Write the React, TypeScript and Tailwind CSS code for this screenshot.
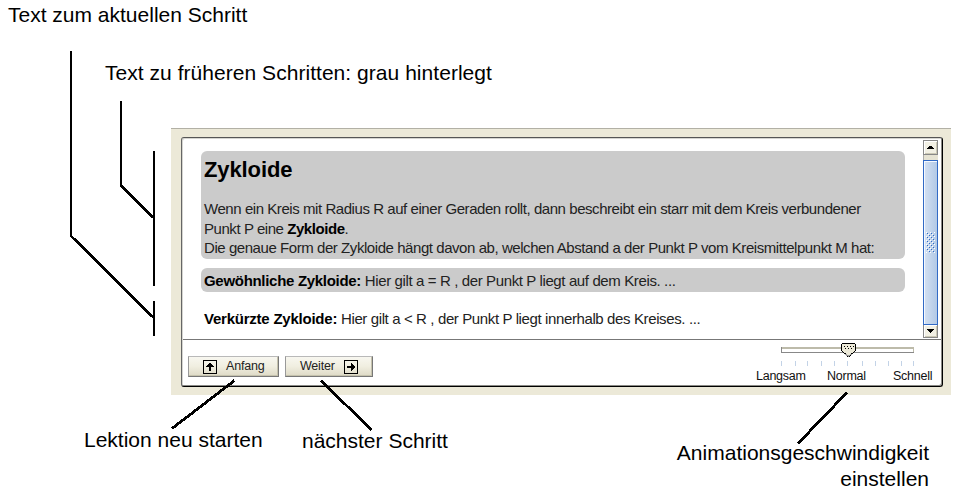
import type { ReactNode } from "react";

const ticks = [0, 14, 26, 40, 53, 66, 81, 94, 107, 120, 132];

function Leaders() {
  return (
    <svg
      className="pointer-events-none absolute inset-0"
      width="953"
      height="494"
      fill="none"
      stroke="#000"
      strokeWidth="2"
      shapeRendering="crispEdges"
    >
      <path d="M71 51V236M121 101V186M154 151V286M154 301V336" />
      <path d="M71 236L154 318M121 186L154 218" strokeWidth="2.800" />
      <path d="M234.500 380.500L172 428.500M321 380.500L371.500 430M847 392.500L798 443.500" strokeWidth="2.800" />
    </svg>
  );
}

function ArrowBox({ right = false }: { right?: boolean }) {
  return (
    <svg width="14" height="14" viewBox="0 0 14 14" className="shrink-0" shapeRendering="crispEdges">
      <rect x="0.500" y="0.500" width="13" height="13" fill="none" stroke="#000" />
      <g transform={right ? "rotate(90 7 7)" : undefined} fill="#000">
        <path d="M6 3h2v8h-2z" />
        <path d="M6 3h2v1h1v1h1v1h1v1H3V6h1V5h1V4h1z" />
      </g>
    </svg>
  );
}

function PushButton({ className, children }: { className: string; children: ReactNode }) {
  return (
    <button
      className={`flex h-[21px] items-center border border-t-[#b9b9b9] border-r-[#777] border-b-[#777] border-l-[#999] bg-linear-to-b from-[#f8f7f0] via-[#f0eee0] to-[#dedac6] text-[12.500px] leading-none tracking-[-0.200px] text-[#222] shadow-[inset_-1px_-1px_0_#c5c2ad] ${className}`}
    >
      {children}
    </button>
  );
}

function Scrollbar() {
  return (
    <div className="flex h-[198px] w-[15px] flex-col bg-[#e6e3d3]">
      <div className="flex h-[15px] items-center justify-center border border-[#888] bg-[#f2f0e4] shadow-[inset_1px_1px_0_#fff,inset_-1px_-1px_0_#cbc8b5]">
        <svg width="7" height="3" shapeRendering="crispEdges"><path d="M2 0h3v1h1v1h1v1H0V2h1V1h1z" /></svg>
      </div>
      <div className="h-[5px] border-l border-[#aaa]" />
      <div className="flex h-[165px] items-center justify-center border border-[#316ac5] bg-linear-to-r from-[#d4e1f2] to-[#b2c9e6] shadow-[inset_1px_1px_0_#f5f9ff]">
        <svg width="9" height="21" shapeRendering="crispEdges">
          <defs>
            <pattern id="grip" width="4" height="4" patternUnits="userSpaceOnUse">
              <path d="M0 0h1v1H0zM2 2h1v1H2z" fill="#fff" />
              <path d="M1 1h1v1H1zM3 3h1v1H3z" fill="#316ac5" />
            </pattern>
          </defs>
          <rect width="9" height="21" fill="url(#grip)" />
        </svg>
      </div>
      <div className="flex h-[13px] items-center justify-center border border-t-0 border-[#888] bg-[#f2f0e4] shadow-[inset_1px_1px_0_#fff,inset_-1px_-1px_0_#cbc8b5]">
        <svg width="7" height="4" shapeRendering="crispEdges"><path d="M0 0h7v1H6v1H5v1H4v1H3V3H2V2H1V1H0z" /></svg>
      </div>
    </div>
  );
}

function SpeedSlider() {
  return (
    <div className="ml-auto w-[190px] pt-[3px]">
      <svg width="188" height="24" className="block" shapeRendering="crispEdges">
        <path d="M29 4h133v6h-133z" fill="#bdbbaa" />
        <path d="M30 6h131v3h-131z" fill="#fff" />
        <path d="M29 9h133v1h-133zM29 4h1v6h-1z" fill="#888" />
        {ticks.map((x) => (
          <rect key={x} x={x + 29} y="18" width="1" height="5" fill="#c3d3e7" />
        ))}
        <path d="M90.500 .5h12l1 1v6l-6 5.500h-2l-6-5.500v-6z" fill="#ece9d8" stroke="#000" />
        <path d="M92 3.500h10M93 5.500h9" stroke="#000" strokeDasharray="1 2" />
        <path d="M93.500 11.500l3 1.500 3-2" stroke="#999" fill="none" />
      </svg>
      <div className="flex pt-[2px] pl-[4px] text-[12.500px] leading-[14px] tracking-[-0.250px] text-[#111]">
        <span className="w-[71px]">Langsam</span>
        <span className="w-[66px]">Normal</span>
        <span className="w-[40px]">Schnell</span>
      </div>
    </div>
  );
}

export default function App() {
  return (
    <div className="relative h-[494px] w-[953px] overflow-hidden bg-white font-['Liberation_Sans',Arial,sans-serif] whitespace-nowrap text-black">
      <div className="h-[128px] pt-[3px] pl-[8px] text-[21px] leading-[24px]">
        <p>Text zum aktuellen Schritt</p>
        <p className="pt-[34px] pl-[97px] tracking-[0.040px]">Text zu früheren Schritten: grau hinterlegt</p>
      </div>

      <div className="ml-[171px] h-[267px] w-[780px] border-t border-[#b2b0a5] bg-[#ece9d8] pt-[8px] pl-[10px]">
        <div className="h-[250px] w-[762px] rounded-[3px] border border-t-[#555] border-r-black border-b-black border-l-[#666] bg-white shadow-[inset_1px_1px_0_#d5d5d0,inset_-1px_-1px_0_#8a8a85]">
          <div className="mx-px flex h-[202px] justify-between border-b border-[#777] pt-[2px] pr-[3px] pl-[18px] text-[15px] leading-[19.500px] tracking-[-0.440px] text-[#222]">
            <div className="w-[704px] pt-[11px]">
              <section className="h-[108px] rounded-[6px] bg-[#cbcbcb] pt-[6px] pl-[3px]">
                <h1 className="text-[22px] leading-[26px] font-bold tracking-[-0.100px] text-black">Zykloide</h1>
                <div className="pt-[16px]">
                  <p>Wenn ein Kreis mit Radius R auf einer Geraden rollt, dann beschreibt ein starr mit dem Kreis verbundener</p>
                  <p>Punkt P eine <b className="text-black">Zykloide</b>.</p>
                  <p>Die genaue Form der Zykloide hängt davon ab, welchen Abstand a der Punkt P vom Kreismittelpunkt M hat:</p>
                </div>
              </section>
              <section className="mt-[9px] h-[24px] rounded-[6px] bg-[#cbcbcb] pt-[3px] pl-[3px] tracking-[-0.380px]">
                <b className="tracking-[-0.300px] text-black">Gewöhnliche Zykloide:</b> Hier gilt a = R , der Punkt P liegt auf dem Kreis. ...
              </section>
              <section className="pt-[17px] pl-[3px] tracking-[-0.380px]">
                <b className="tracking-[-0.230px] text-black">Verkürzte Zykloide:</b> Hier gilt a &lt; R , der Punkt P liegt innerhalb des Kreises. ...
              </section>
            </div>
            <Scrollbar />
          </div>
          <div className="flex pl-[6px]">
            <div className="flex gap-[6px] pt-[16px]">
              <PushButton className="w-[91px] gap-[9px] pl-[14px]"><ArrowBox /><span>Anfang</span></PushButton>
              <PushButton className="w-[88px] gap-[9px] pl-[14px]"><span>Weiter</span><ArrowBox right /></PushButton>
            </div>
            <SpeedSlider />
          </div>
        </div>
      </div>

      <div className="flex text-[21px] leading-[26px]">
        <p className="box-content w-[218px] pt-[32px] pl-[84px]">Lektion neu starten</p>
        <p className="w-[200px] pt-[33px]">nächster Schritt</p>
        <p className="ml-auto pt-[45px] pr-[24px] text-right">Animationsgeschwindigkeit<br />einstellen</p>
      </div>
      <Leaders />
    </div>
  );
}
